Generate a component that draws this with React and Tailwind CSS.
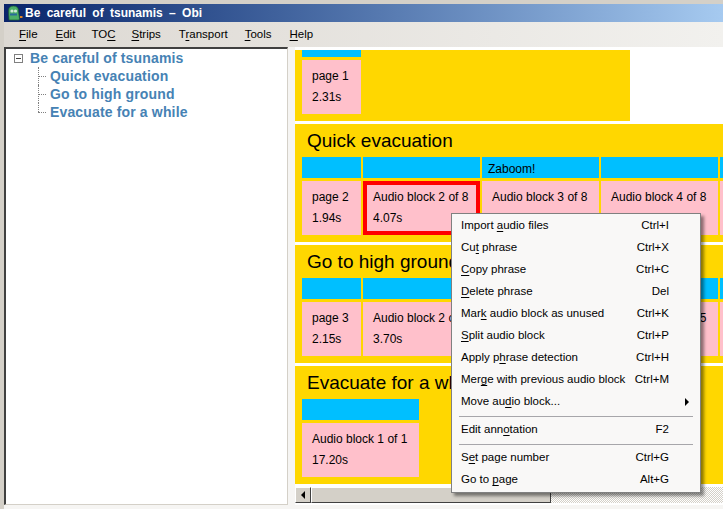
import React from 'react';

const Key = ({ children }) => <span className="underline underline-offset-2">{children}</span>;

const menus = [
  { cls: '', label: <><Key>F</Key>ile</> },
  { cls: '', label: <><Key>E</Key>dit</> },
  { cls: '-ml-[2px]', label: <>TO<Key>C</Key></> },
  { cls: '-ml-[2px]', label: <><Key>S</Key>trips</> },
  { cls: '', label: <>T<Key>r</Key>ansport</> },
  { cls: '-ml-[1px]', label: <><Key>T</Key>ools</> },
  { cls: '', label: <><Key>H</Key>elp</> },
];

const Block = ({ w, children, time, selected }) => (
  <div
    className={`shrink-0 h-[54px] bg-[#ffc0cb] text-[12px] leading-[21px] ${w} ${selected ? 'border-[4px] border-[#ff0000] pl-[6px] pt-[2px]' : 'pl-[10px] pt-[6px]'}`}
  >
    <div className="whitespace-nowrap">{children}</div>
    <div>{time}</div>
  </div>
);

const Strip = ({ title, labels, blocks }) => (
  <div className="bg-[#ffd700] shrink-0 overflow-hidden pl-[7px] w-[428px] h-[118px]">
    <div className="text-[19px] leading-[33px] pl-[5px] whitespace-nowrap">{title}</div>
    <div className="flex gap-[2px]">
      {labels.map((l, i) => (
        <div key={i} className={`shrink-0 h-[21px] bg-[#00bfff] text-[12px] leading-[24px] pl-[6px] ${l.w}`}>{l.text}</div>
      ))}
    </div>
    <div className="flex gap-[2px] mt-[3px]">
      {blocks.map((b, i) => (
        <Block key={i} w={b.w} time={b.time} selected={b.selected}>{b.text}</Block>
      ))}
    </div>
  </div>
);

const MenuRow = ({ label, shortcut, arrow }) => (
  <div className="flex items-center justify-between h-[22px] pl-[9px] pr-[31px] relative whitespace-nowrap">
    <span>{label}</span>
    <span>{shortcut}</span>
    {arrow && <span className="absolute right-[11px] top-[7px] w-0 h-0 border-y-[4px] border-y-transparent border-l-[4px] border-l-black" />}
  </div>
);

const Divider = () => <div className="h-px bg-[#a7a6aa] mx-[7px] mt-[3px] mb-[2px]" />;

export default function App() {
  return (
    <div className="relative w-[723px] h-[509px] overflow-hidden bg-[#d4d0c8] font-['Liberation_Sans',sans-serif] text-black">
      <div className="h-[4px]" />
      {/* title bar */}
      <div className="ml-[4px] h-[18px] flex items-center gap-[2px] pl-[3px] bg-gradient-to-r from-[#0a246a] to-[#a6caf0] text-white font-bold text-[12px] [word-spacing:3px]">
        <svg width="16" height="16" viewBox="0 0 16 16">
          <path d="M2 15 L1.5 6 Q1.5 1 6.5 1 Q11.5 1 11.5 6 L12.5 14 L12 15 Z" fill="#4caf68" stroke="#1d5a34" strokeWidth="0.7" />
          <circle cx="5" cy="6" r="1.6" fill="#cfe8d6" />
          <circle cx="8.5" cy="6" r="1.6" fill="#cfe8d6" />
          <rect x="3" y="8.5" width="7" height="2" fill="#2a6a9a" />
          <rect x="13" y="11" width="2.5" height="2" fill="#e08020" />
        </svg>
        <span>Be careful of tsunamis – Obi</span>
      </div>
      {/* menu bar */}
      <div className="ml-[4px] h-[25px] flex items-center pl-[15px] gap-[18px] bg-gradient-to-r from-[#dcd8d2] to-[#f2f1ee] text-[11.5px]">
        {menus.map((m, i) => (
          <span key={i} className={m.cls}>{m.label}</span>
        ))}
      </div>
      <div className="ml-[4px] flex h-[462px] bg-[#f6f5f3]">
        {/* toc tree */}
        <div className="w-[284px] h-[458px] bg-white border-t-2 border-l-2 border-t-[#404040] border-l-[#404040] border-r border-b border-r-[#d4d0c8] border-b-[#d4d0c8] text-[#4682b4] font-bold text-[14px] tracking-[0.15px] leading-[18px]">
          <div className="flex items-center h-[18px]">
            <span className="ml-[8px] w-[9px] h-[9px] border border-[#808080] flex items-center justify-center shrink-0">
              <span className="w-[5px] h-px bg-[#404040]" />
            </span>
            <span className="ml-[7px]">Be careful of tsunamis</span>
          </div>
          {['Quick evacuation', 'Go to high ground', 'Evacuate for a while'].map((t, i) => (
            <div key={t} className="flex items-center h-[18px] ml-[32px] relative">
              <span className={`absolute left-0 top-0 border-l border-dotted border-[#808080] ${i === 2 ? 'h-[9px]' : 'h-[18px]'}`} />
              <span className="w-[8px] border-t border-dotted border-[#808080] shrink-0" />
              <span className="ml-[4px]">{t}</span>
            </div>
          ))}
        </div>
        {/* strips */}
        <div className="ml-[7px] w-[428px] h-[458px] bg-white flex flex-col">
          <div className="h-[440px] overflow-hidden flex flex-col gap-[3px] pt-[3px]">
            <div className="bg-[#ffd700] shrink-0 w-[335px] h-[71px] pl-[7px]">
              <div className="w-[59px] h-[7px] bg-[#00bfff]" />
              <div className="mt-[3px]"><Block w="w-[59px]" time="2.31s">page 1</Block></div>
            </div>
            <Strip
              title="Quick evacuation"
              labels={[{ w: 'w-[59px]' }, { w: 'w-[117px]' }, { w: 'w-[117px]', text: 'Zaboom!' }, { w: 'w-[117px]' }, { w: 'w-[117px]' }]}
              blocks={[
                { w: 'w-[59px]', text: 'page 2', time: '1.94s' },
                { w: 'w-[117px]', text: 'Audio block 2 of 8', time: '4.07s', selected: true },
                { w: 'w-[117px]', text: 'Audio block 3 of 8', time: '2.10s' },
                { w: 'w-[117px]', text: 'Audio block 4 of 8', time: '1.20s' },
                { w: 'w-[117px]' },
              ]}
            />
            <Strip
              title="Go to high ground"
              labels={[{ w: 'w-[59px]' }, { w: 'w-[117px]' }, { w: 'w-[117px]' }, { w: 'w-[117px]' }, { w: 'w-[117px]' }]}
              blocks={[
                { w: 'w-[59px]', text: 'page 3', time: '2.15s' },
                { w: 'w-[117px]', text: 'Audio block 2 of 5', time: '3.70s' },
                { w: 'w-[117px]', text: 'Audio block 3 of 5', time: '1.85s' },
                { w: 'w-[117px]', text: 'Audio block 4 of 5', time: '1.60s' },
                { w: 'w-[117px]' },
              ]}
            />
            <Strip
              title="Evacuate for a while"
              labels={[{ w: 'w-[117px]' }]}
              blocks={[{ w: 'w-[117px]', text: 'Audio block 1 of 1', time: '17.20s' }]}
            />
          </div>
          {/* horizontal scrollbar */}
          <div className="flex h-[16px] bg-[repeating-conic-gradient(#d4d0c8_0%_25%,#ffffff_0%_50%)] bg-[length:2px_2px]">
            <div className="w-[16px] bg-[#d4d0c8] border-t border-l border-t-white border-l-white border-r border-b border-r-[#404040] border-b-[#404040] flex items-center justify-center">
              <span className="w-0 h-0 border-y-[4px] border-y-transparent border-r-[4px] border-r-black" />
            </div>
            <div className="w-[240px] bg-[#d4d0c8] border-t border-l border-t-white border-l-white border-r border-b border-r-[#404040] border-b-[#404040]" />
          </div>
        </div>
      </div>
      {/* context menu */}
      <div className="absolute left-[451px] top-[213px] w-[250px] h-[280px] bg-[#f9f8f7] border border-[#808080] shadow-[3px_3px_3px_rgba(0,0,0,0.45)] text-[11.5px] pt-px">
        <MenuRow label={<>Import <Key>a</Key>udio files</>} shortcut="Ctrl+I" />
        <MenuRow label={<>Cu<Key>t</Key> phrase</>} shortcut="Ctrl+X" />
        <MenuRow label={<><Key>C</Key>opy phrase</>} shortcut="Ctrl+C" />
        <MenuRow label={<><Key>D</Key>elete phrase</>} shortcut="Del" />
        <MenuRow label={<>Mar<Key>k</Key> audio block as unused</>} shortcut="Ctrl+K" />
        <MenuRow label={<><Key>S</Key>plit audio block</>} shortcut="Ctrl+P" />
        <MenuRow label={<>Apply p<Key>h</Key>rase detection</>} shortcut="Ctrl+H" />
        <MenuRow label={<>Mer<Key>g</Key>e with previous audio block</>} shortcut="Ctrl+M" />
        <MenuRow label={<>Move au<Key>d</Key>io block...</>} arrow />
        <Divider />
        <MenuRow label={<>Edit ann<Key>o</Key>tation</>} shortcut="F2" />
        <Divider />
        <MenuRow label={<>S<Key>e</Key>t page number</>} shortcut="Ctrl+G" />
        <MenuRow label={<>Go to <Key>p</Key>age</>} shortcut="Alt+G" />
      </div>
    </div>
  );
}
